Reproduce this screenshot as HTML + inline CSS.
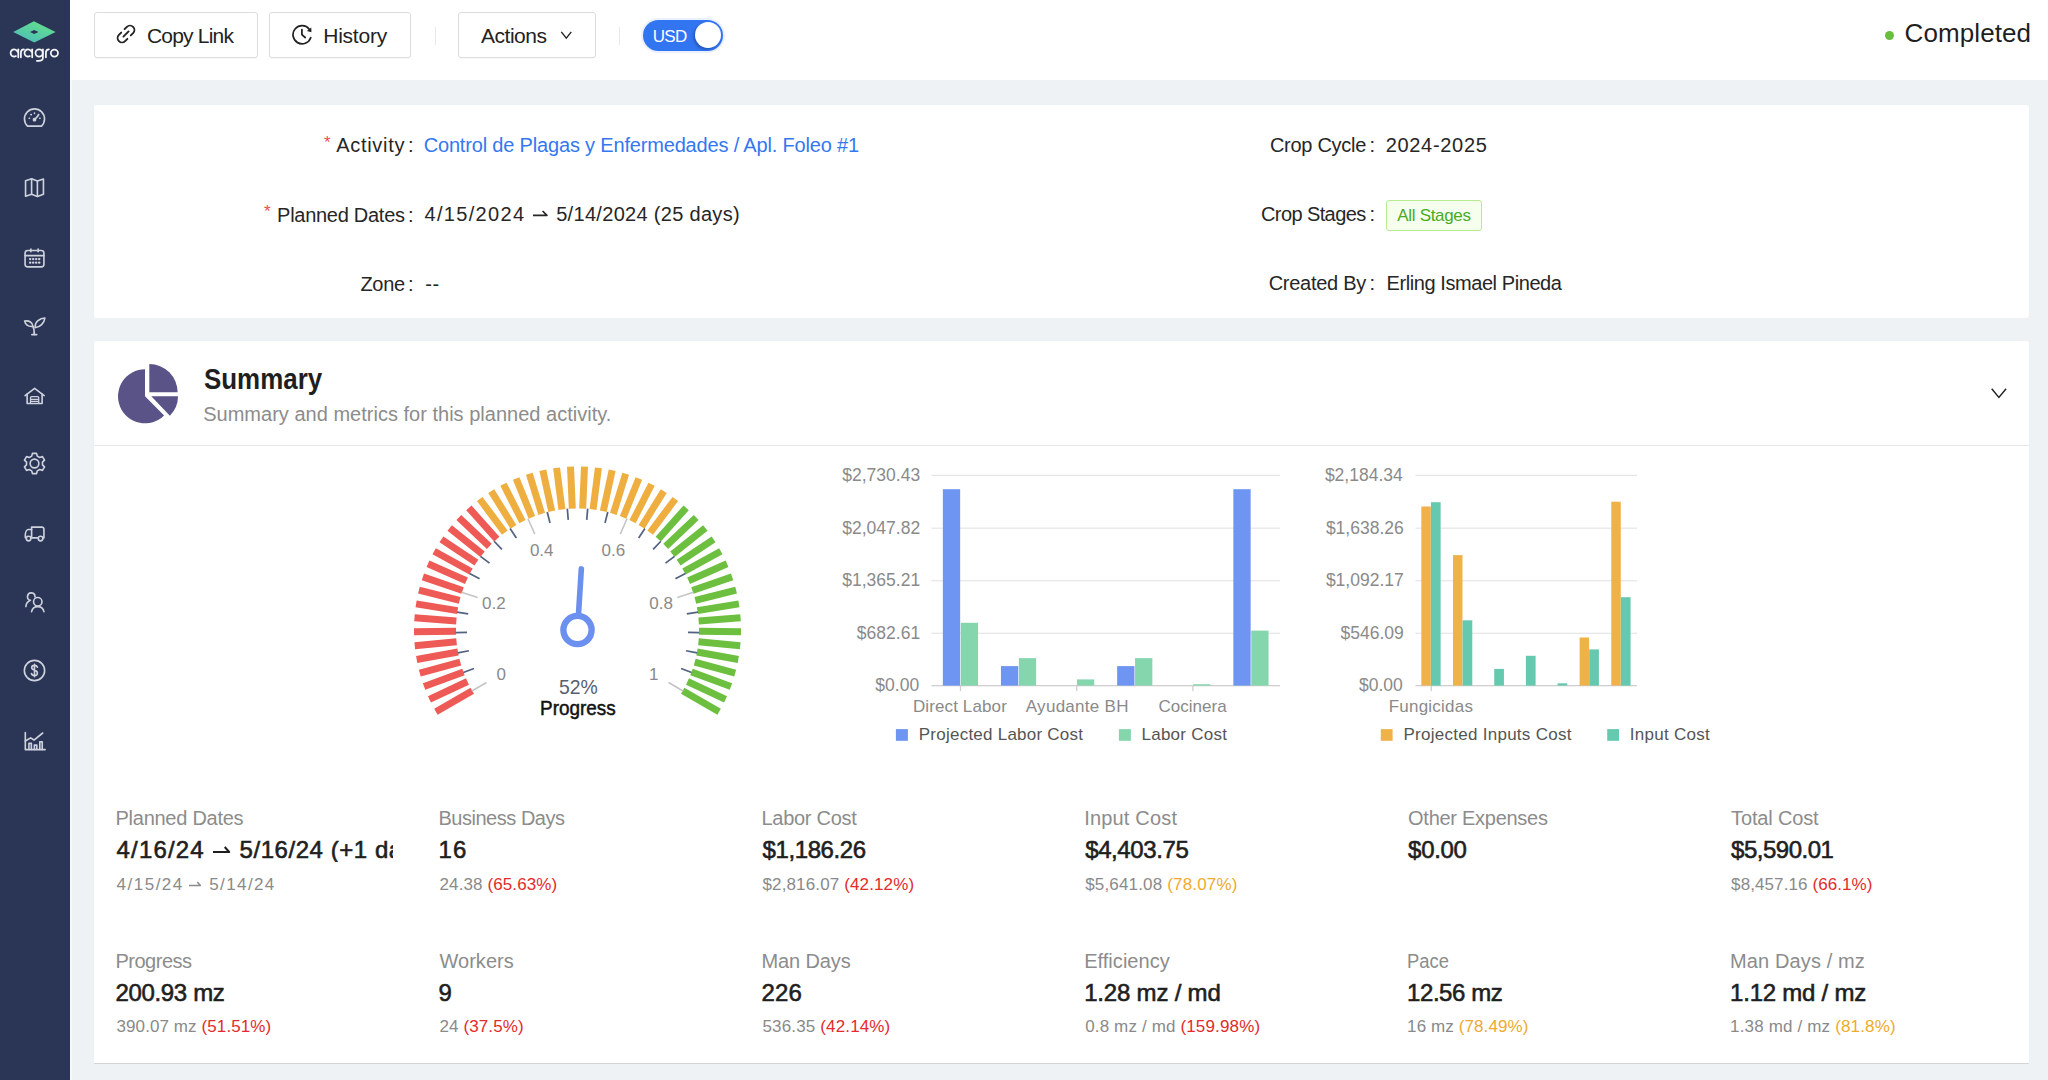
<!DOCTYPE html>
<html><head><meta charset="utf-8">
<style>
*{box-sizing:border-box;margin:0;padding:0}
html,body{width:2048px;height:1080px;overflow:hidden;background:#EFF2F5;font-family:"Liberation Sans",sans-serif;color:#222}
.abs{position:absolute}
.tx{position:absolute;white-space:nowrap;line-height:1}
</style></head>
<body>
<div class="abs" style="left:0;top:0;width:70px;height:1080px;background:#2B3556"></div>
<svg class="abs" style="left:0;top:0" width="70" height="70" viewBox="0 0 70 70">
<defs><linearGradient id="lg" x1="0.8" y1="0" x2="0.2" y2="1"><stop offset="0.2" stop-color="#60DA93"/><stop offset="0.75" stop-color="#52C5AE"/></linearGradient></defs>
<path d="M33.9 21.3 L55.6 31.9 L34.3 42.6 L13.2 31.9 Z" fill="url(#lg)"/>
<path d="M34.2 29.9 L38.4 31.9 L34.2 34 L30 31.9 Z" fill="#2B3556"/>
</svg>
<svg class="abs" style="left:0;top:40px" width="70" height="25" viewBox="0 40 70 25"><g fill="none" stroke="#F4F5F8" stroke-width="1.75" stroke-linecap="round">
<path d="M14.2 53 m3.38 -1.23 A3.6 3.6 0 1 0 16.0 56.1"/><path d="M18.3 49.3 V57.3"/>
<path d="M20.9 57.3 V52.8 C20.9 50.4 22.0 49.3 23.9 49.3"/>
<path d="M28.1 53 m3.38 -1.23 A3.6 3.6 0 1 0 29.9 56.1"/><path d="M32.2 49.3 V57.3"/>
<circle cx="39.1" cy="53" r="3.6"/><path d="M42.9 49.3 V57.8 C42.9 60.2 41.2 60.9 38.6 60.9 H36.9"/>
<path d="M45.9 57.3 V52.8 C45.9 50.4 47.0 49.3 48.9 49.3"/>
<circle cx="54.4" cy="53.1" r="3.6"/>
</g></svg>
<svg class="abs" style="left:19.5px;top:103.5px" width="29" height="29" viewBox="0 0 24 24"><g fill="none" stroke="#CDD2DC" stroke-width="1.35" stroke-linecap="round" stroke-linejoin="round"><path d="M6.2 18.3 A8.3 8.3 0 1 1 17.8 18.3 Z"/><path d="M12 13 L15 9.6"/><circle cx="12" cy="13" r="0.9" fill="#CDD2DC"/><path d="M7.6 11.8h.3M9 8.8h.3M12 7.6v.3M15.2 8.8h.3M16.3 11.8h.3"/></g></svg>
<svg class="abs" style="left:19.5px;top:172.5px" width="29" height="29" viewBox="0 0 24 24"><g fill="none" stroke="#CDD2DC" stroke-width="1.35" stroke-linecap="round" stroke-linejoin="round"><path d="M4.6 6.4 L9.6 4.8 L14.4 6.6 L19.4 5 V17.6 L14.4 19.4 L9.6 17.6 L4.6 19.2 Z"/><path d="M9.6 4.8 V17.6 M14.4 6.6 V19.4"/></g></svg>
<svg class="abs" style="left:19.5px;top:242.5px" width="29" height="29" viewBox="0 0 24 24"><g fill="none" stroke="#CDD2DC" stroke-width="1.35" stroke-linecap="round" stroke-linejoin="round"><rect x="4.2" y="6.2" width="15.6" height="13.6" rx="2.2"/><path d="M4.2 10.4 H19.8 M9 5 V7.2 M15 5 V7.2"/><path d="M8.3 13.3h.2M10.8 13.3h.2M13.3 13.3h.2M15.8 13.3h.2M8.3 16.3h.2M10.8 16.3h.2M13.3 16.3h.2M15.8 16.3h.2" stroke-width="1.9"/></g></svg>
<svg class="abs" style="left:19.5px;top:311.0px" width="29" height="29" viewBox="0 0 24 24"><g fill="none" stroke="#CDD2DC" stroke-width="1.35" stroke-linecap="round" stroke-linejoin="round"><path d="M11.8 19.5 C11.8 16.5 11.6 14.5 10.7 12.8"/><path d="M9.8 19.6 H13.8"/><path d="M3.8 8.4 C7.5 7.6 10.6 9.5 10.7 12.8 C7 13.2 4.6 11.2 3.8 8.4 Z"/><path d="M20.6 5.8 C16.5 6 12.2 8.8 12.5 13.8 C16.6 13.4 20.1 10.2 20.6 5.8 Z"/></g></svg>
<svg class="abs" style="left:19.5px;top:380.5px" width="29" height="29" viewBox="0 0 24 24"><g fill="none" stroke="#CDD2DC" stroke-width="1.35" stroke-linecap="round" stroke-linejoin="round"><path d="M4.2 12.1 L12.1 6.1 L20 12.1"/><path d="M5.9 10.9 V18.6 H18.3 V10.9"/><path d="M8.7 18.4 V13.8 Q8.7 12.9 9.6 12.9 H14.6 Q15.5 12.9 15.5 13.8 V18.4 M8.7 15.2 H15.5 M8.7 16.8 H15.5" stroke-width="1.1"/></g></svg>
<svg class="abs" style="left:19.5px;top:448.7px" width="29" height="29" viewBox="0 0 24 24"><g fill="none" stroke="#CDD2DC" stroke-width="1.35" stroke-linecap="round" stroke-linejoin="round"><path d="M10.3 4.6 H13.7 L14.3 6.9 L16.3 8 L18.6 7.3 L20.3 10.2 L18.6 11.9 V14.1 L20.3 15.8 L18.6 18.7 L16.3 18 L14.3 19.1 L13.7 21.4 H10.3 L9.7 19.1 L7.7 18 L5.4 18.7 L3.7 15.8 L5.4 14.1 V11.9 L3.7 10.2 L5.4 7.3 L7.7 8 L9.7 6.9 Z" transform="translate(0,-1)"/><circle cx="12" cy="12" r="3.6"/></g></svg>
<svg class="abs" style="left:19.5px;top:518.3px" width="29" height="29" viewBox="0 0 24 24"><g fill="none" stroke="#CDD2DC" stroke-width="1.35" stroke-linecap="round" stroke-linejoin="round"><path d="M9.6 16.5 H15.2 M18.8 16.5 H19.8 V9.2 A1.7 1.7 0 0 0 18.1 7.5 H9.6 V16.5"/><path d="M9.6 9.5 H7 C5.4 9.5 4.4 12 4.4 14.2 V16.2 L5.2 16.6"/><circle cx="7.1" cy="17" r="1.9"/><circle cx="17" cy="17" r="1.9"/></g></svg>
<svg class="abs" style="left:19.5px;top:587.3px" width="29" height="29" viewBox="0 0 24 24"><g fill="none" stroke="#CDD2DC" stroke-width="1.35" stroke-linecap="round" stroke-linejoin="round"><path d="M12.4 8.2 A3.1 3.1 0 1 0 8.6 11 C6.6 11.8 5 13.8 4.9 16.2"/><circle cx="14.7" cy="12.2" r="3.5"/><path d="M9.6 20.4 A5.2 5.2 0 0 1 19.8 20.4"/></g></svg>
<svg class="abs" style="left:19.5px;top:656.3px" width="29" height="29" viewBox="0 0 24 24"><g fill="none" stroke="#CDD2DC" stroke-width="1.35" stroke-linecap="round" stroke-linejoin="round"><circle cx="12" cy="12" r="8.4"/><path d="M14.4 9.3 C14 8.2 13.1 7.8 12 7.8 C10.6 7.8 9.7 8.6 9.7 9.7 C9.7 12.3 14.4 11 14.4 14 C14.4 15.3 13.3 16.2 12 16.2 C10.7 16.2 9.8 15.6 9.5 14.5 M12 6.8 V17.2"/></g></svg>
<svg class="abs" style="left:19.5px;top:726.0px" width="29" height="29" viewBox="0 0 24 24"><g fill="none" stroke="#CDD2DC" stroke-width="1.35" stroke-linecap="round" stroke-linejoin="round"><path d="M4.4 5.4 V19.6 H20.8"/><path d="M4.4 12.4 L8.8 9.8 L11.6 11.6 L18.8 5.8"/><path d="M7.4 19.4 V14.4 H9.4 V19.4 M11.9 19.4 V15.8 H13.9 V19.4 M16.4 19.4 V13 H18.4 V19.4"/></g></svg><div class="abs" style="left:70px;top:0;width:1978px;height:80px;background:#fff"></div>
<div class="abs" style="left:70px;top:80px;width:1.6px;height:1000px;background:#F5F9FD"></div>
<div class="abs" style="left:94px;top:12px;width:164px;height:46px;border:1px solid #dcdcdc;border-radius:3px;box-shadow:0 1px 1px rgba(0,0,0,.03)"></div>
<div class="abs" style="left:269px;top:12px;width:142px;height:46px;border:1px solid #dcdcdc;border-radius:3px;box-shadow:0 1px 1px rgba(0,0,0,.03)"></div>
<div class="abs" style="left:458px;top:12px;width:138px;height:46px;border:1px solid #dcdcdc;border-radius:3px;box-shadow:0 1px 1px rgba(0,0,0,.03)"></div>
<div class="abs" style="left:434.5px;top:27px;width:1px;height:18px;background:#e8e8e8"></div>
<div class="abs" style="left:619px;top:27px;width:1px;height:18px;background:#e8e8e8"></div>
<svg class="abs" style="left:116px;top:24px" width="20" height="20" viewBox="0 0 20 20"><g fill="none" stroke="#222" stroke-width="1.9" stroke-linecap="round"><path d="M8.6 5.2 L10.9 2.9 A3.4 3.4 0 0 1 17.1 9.1 L14.8 11.4"/><path d="M11.4 14.8 L9.1 17.1 A3.4 3.4 0 0 1 2.9 10.9 L5.2 8.6"/><path d="M7.4 12.6 L12.6 7.4"/></g></svg>
<svg class="abs" style="left:292px;top:24px" width="21" height="21" viewBox="0 0 21 21"><g fill="none" stroke="#222" stroke-width="1.75" stroke-linecap="round"><path d="M17.3 5.2 A9.1 9.1 0 1 0 18.7 13.7"/><path d="M9.9 5.6 V10.6 L13.2 13.5"/></g><path d="M19.3 3.4 L19.4 8.3 L14.9 6.9 Z" fill="#222"/></svg>
<svg class="abs" style="left:560px;top:30px" width="13" height="10" viewBox="0 0 13 10"><path d="M1.3 1.8 L6.3 8.2 L11.3 1.8" fill="none" stroke="#222" stroke-width="1.35"/></svg>
<div class="abs" style="left:641px;top:18px;width:84px;height:35px;border-radius:18px;background:rgba(50,117,240,.10)"></div>
<div class="abs" style="left:643px;top:20px;width:80px;height:31px;border-radius:16px;background:#3275F0"></div>
<div class="abs" style="left:695.2px;top:22.3px;width:26px;height:26px;border-radius:50%;background:#fff;box-shadow:-1.5px 1.5px 2.5px rgba(0,30,90,.35)"></div>
<div class="abs" style="left:1885px;top:30.7px;width:9.3px;height:9.3px;border-radius:50%;background:#68BF3E"></div>
<div class="abs" style="left:94px;top:104.5px;width:1935px;height:213.3px;background:#fff;border-radius:2px;box-shadow:0 0 1px rgba(0,0,0,.06)"></div>
<div class="abs" style="left:94px;top:340.7px;width:1935px;height:722.3px;background:#fff;border-radius:2px 2px 0 0;box-shadow:0 0 1px rgba(0,0,0,.06)"></div>
<div class="abs" style="left:94px;top:1062.5px;width:1935px;height:1.2px;background:#D4D4D4"></div>
<div class="abs" style="left:94px;top:445px;width:1935px;height:1px;background:#e8e8e8"></div>
<div class="abs" style="left:1386px;top:200px;width:96px;height:30.5px;border:1px solid #B7EB8F;background:#F6FFED;border-radius:3px"></div>
<div class="tx" style="left:324px;top:134px;font-size:17px;color:#EC4F4F">*</div>
<div class="tx" style="left:264px;top:202.5px;font-size:17px;color:#EC4F4F">*</div>
<svg class="abs" style="left:112px;top:358px" width="72" height="72" viewBox="112 358 72 72">
<path d="M145 369.3 A27 27 0 1 0 164.1 415.4 L145 396.3 Z" fill="#5A5387"/>
<path d="M149.3 364 A28.3 28.3 0 0 1 177.6 392.3 L149.3 392.3 Z" fill="#5A5387"/>
<path d="M151.3 396.3 H178 A27.5 27.5 0 0 1 169.9 415.7 Z" fill="#5A5387"/>
</svg>
<svg class="abs" style="left:1990px;top:387px" width="18" height="13" viewBox="0 0 18 13"><path d="M1.7 1.8 L8.9 10.4 L16.1 1.8" fill="none" stroke="#222" stroke-width="1.45"/></svg>
<svg class="abs" style="left:530.8px;top:209.1px" width="17.90000000000009" height="8.3"><path d="M2 6.3 H15.900000000000091 L11.60000000000009 2" fill="none" stroke="#262626" stroke-width="1.7" stroke-linejoin="round"/></svg><svg class="abs" style="left:211px;top:844.7px" width="20.19999999999999" height="9"><path d="M2 7 H18.19999999999999 L13.699999999999989 2" fill="none" stroke="#1f1f1f" stroke-width="2.0" stroke-linejoin="round"/></svg><svg class="abs" style="left:187.2px;top:880.4px" width="15.400000000000006" height="7.5"><path d="M2 5.5 H13.400000000000006 L10.300000000000006 2" fill="none" stroke="#8a8a8a" stroke-width="1.5" stroke-linejoin="round"/></svg>
<svg class="abs" style="left:0;top:0" width="2048" height="1080" font-family="Liberation Sans"><line x1="472.28" y1="690.75" x2="435.90" y2="711.75" stroke="#EE5A55" stroke-width="7.0"/><line x1="467.48" y1="681.54" x2="429.44" y2="699.36" stroke="#EE5A55" stroke-width="7.0"/><line x1="463.48" y1="671.96" x2="424.06" y2="686.47" stroke="#EE5A55" stroke-width="7.0"/><line x1="460.31" y1="662.07" x2="419.80" y2="673.16" stroke="#EE5A55" stroke-width="7.0"/><line x1="458.00" y1="651.95" x2="416.69" y2="659.54" stroke="#EE5A55" stroke-width="7.0"/><line x1="456.56" y1="641.67" x2="414.76" y2="645.70" stroke="#EE5A55" stroke-width="7.0"/><line x1="456.01" y1="631.30" x2="414.01" y2="631.75" stroke="#EE5A55" stroke-width="7.0"/><line x1="456.34" y1="620.92" x2="414.46" y2="617.78" stroke="#EE5A55" stroke-width="7.0"/><line x1="457.56" y1="610.61" x2="416.10" y2="603.91" stroke="#EE5A55" stroke-width="7.0"/><line x1="459.65" y1="600.44" x2="418.91" y2="590.22" stroke="#EE5A55" stroke-width="7.0"/><line x1="462.61" y1="590.48" x2="422.89" y2="576.82" stroke="#EE5A55" stroke-width="7.0"/><line x1="466.40" y1="580.82" x2="427.99" y2="563.82" stroke="#EE5A55" stroke-width="7.0"/><line x1="471.00" y1="571.51" x2="434.19" y2="551.29" stroke="#EE5A55" stroke-width="7.0"/><line x1="476.39" y1="562.63" x2="441.43" y2="539.35" stroke="#EE5A55" stroke-width="7.0"/><line x1="482.51" y1="554.25" x2="449.67" y2="528.06" stroke="#EE5A55" stroke-width="7.0"/><line x1="489.32" y1="546.41" x2="458.84" y2="517.52" stroke="#EE5A55" stroke-width="7.0"/><line x1="496.78" y1="539.19" x2="468.88" y2="507.80" stroke="#EE5A55" stroke-width="7.0"/><line x1="504.83" y1="532.63" x2="479.71" y2="498.97" stroke="#EEAE40" stroke-width="7.0"/><line x1="513.41" y1="526.78" x2="491.25" y2="491.10" stroke="#EEAE40" stroke-width="7.0"/><line x1="522.46" y1="521.68" x2="503.43" y2="484.24" stroke="#EEAE40" stroke-width="7.0"/><line x1="531.91" y1="517.38" x2="516.14" y2="478.45" stroke="#EEAE40" stroke-width="7.0"/><line x1="541.69" y1="513.90" x2="529.31" y2="473.76" stroke="#EEAE40" stroke-width="7.0"/><line x1="551.73" y1="511.26" x2="542.82" y2="470.22" stroke="#EEAE40" stroke-width="7.0"/><line x1="561.96" y1="509.50" x2="556.59" y2="467.84" stroke="#EEAE40" stroke-width="7.0"/><line x1="572.31" y1="508.61" x2="570.51" y2="466.65" stroke="#EEAE40" stroke-width="7.0"/><line x1="582.69" y1="508.61" x2="584.49" y2="466.65" stroke="#EEAE40" stroke-width="7.0"/><line x1="593.04" y1="509.50" x2="598.41" y2="467.84" stroke="#EEAE40" stroke-width="7.0"/><line x1="603.27" y1="511.26" x2="612.18" y2="470.22" stroke="#EEAE40" stroke-width="7.0"/><line x1="613.31" y1="513.90" x2="625.69" y2="473.76" stroke="#EEAE40" stroke-width="7.0"/><line x1="623.09" y1="517.38" x2="638.86" y2="478.45" stroke="#EEAE40" stroke-width="7.0"/><line x1="632.54" y1="521.68" x2="651.57" y2="484.24" stroke="#EEAE40" stroke-width="7.0"/><line x1="641.59" y1="526.78" x2="663.75" y2="491.10" stroke="#EEAE40" stroke-width="7.0"/><line x1="650.17" y1="532.63" x2="675.29" y2="498.97" stroke="#EEAE40" stroke-width="7.0"/><line x1="658.22" y1="539.19" x2="686.12" y2="507.80" stroke="#6DBF3F" stroke-width="7.0"/><line x1="665.68" y1="546.41" x2="696.16" y2="517.52" stroke="#6DBF3F" stroke-width="7.0"/><line x1="672.49" y1="554.25" x2="705.33" y2="528.06" stroke="#6DBF3F" stroke-width="7.0"/><line x1="678.61" y1="562.63" x2="713.57" y2="539.35" stroke="#6DBF3F" stroke-width="7.0"/><line x1="684.00" y1="571.51" x2="720.81" y2="551.29" stroke="#6DBF3F" stroke-width="7.0"/><line x1="688.60" y1="580.82" x2="727.01" y2="563.82" stroke="#6DBF3F" stroke-width="7.0"/><line x1="692.39" y1="590.48" x2="732.11" y2="576.82" stroke="#6DBF3F" stroke-width="7.0"/><line x1="695.35" y1="600.44" x2="736.09" y2="590.22" stroke="#6DBF3F" stroke-width="7.0"/><line x1="697.44" y1="610.61" x2="738.90" y2="603.91" stroke="#6DBF3F" stroke-width="7.0"/><line x1="698.66" y1="620.92" x2="740.54" y2="617.78" stroke="#6DBF3F" stroke-width="7.0"/><line x1="698.99" y1="631.30" x2="740.99" y2="631.75" stroke="#6DBF3F" stroke-width="7.0"/><line x1="698.44" y1="641.67" x2="740.24" y2="645.70" stroke="#6DBF3F" stroke-width="7.0"/><line x1="697.00" y1="651.95" x2="738.31" y2="659.54" stroke="#6DBF3F" stroke-width="7.0"/><line x1="694.69" y1="662.07" x2="735.20" y2="673.16" stroke="#6DBF3F" stroke-width="7.0"/><line x1="691.52" y1="671.96" x2="730.94" y2="686.47" stroke="#6DBF3F" stroke-width="7.0"/><line x1="687.52" y1="681.54" x2="725.56" y2="699.36" stroke="#6DBF3F" stroke-width="7.0"/><line x1="682.72" y1="690.75" x2="719.10" y2="711.75" stroke="#6DBF3F" stroke-width="7.0"/><line x1="486.57" y1="682.50" x2="471.84" y2="691.00" stroke="#C4C4C4" stroke-width="1.5"/><line x1="473.93" y1="668.52" x2="463.34" y2="672.46" stroke="#526281" stroke-width="1.7"/><line x1="468.96" y1="650.71" x2="457.86" y2="652.82" stroke="#526281" stroke-width="1.7"/><line x1="467.02" y1="632.31" x2="455.73" y2="632.55" stroke="#526281" stroke-width="1.7"/><line x1="468.19" y1="613.86" x2="457.01" y2="612.21" stroke="#526281" stroke-width="1.7"/><line x1="477.64" y1="597.55" x2="461.47" y2="592.30" stroke="#C4C4C4" stroke-width="1.5"/><line x1="479.57" y1="578.81" x2="469.56" y2="573.57" stroke="#526281" stroke-width="1.7"/><line x1="489.48" y1="563.19" x2="480.48" y2="556.36" stroke="#526281" stroke-width="1.7"/><line x1="501.86" y1="549.45" x2="494.12" y2="541.21" stroke="#526281" stroke-width="1.7"/><line x1="516.35" y1="537.96" x2="510.10" y2="528.55" stroke="#526281" stroke-width="1.7"/><line x1="534.79" y1="534.08" x2="527.88" y2="518.55" stroke="#C4C4C4" stroke-width="1.5"/><line x1="550.02" y1="522.97" x2="547.21" y2="512.03" stroke="#526281" stroke-width="1.7"/><line x1="568.25" y1="519.89" x2="567.31" y2="508.63" stroke="#526281" stroke-width="1.7"/><line x1="586.75" y1="519.89" x2="587.69" y2="508.63" stroke="#526281" stroke-width="1.7"/><line x1="604.98" y1="522.97" x2="607.79" y2="512.03" stroke="#526281" stroke-width="1.7"/><line x1="620.21" y1="534.08" x2="627.12" y2="518.55" stroke="#C4C4C4" stroke-width="1.5"/><line x1="638.65" y1="537.96" x2="644.90" y2="528.55" stroke="#526281" stroke-width="1.7"/><line x1="653.14" y1="549.45" x2="660.88" y2="541.21" stroke="#526281" stroke-width="1.7"/><line x1="665.52" y1="563.19" x2="674.52" y2="556.36" stroke="#526281" stroke-width="1.7"/><line x1="675.43" y1="578.81" x2="685.44" y2="573.57" stroke="#526281" stroke-width="1.7"/><line x1="677.36" y1="597.55" x2="693.53" y2="592.30" stroke="#C4C4C4" stroke-width="1.5"/><line x1="686.81" y1="613.86" x2="697.99" y2="612.21" stroke="#526281" stroke-width="1.7"/><line x1="687.98" y1="632.31" x2="699.27" y2="632.55" stroke="#526281" stroke-width="1.7"/><line x1="686.04" y1="650.71" x2="697.14" y2="652.82" stroke="#526281" stroke-width="1.7"/><line x1="681.07" y1="668.52" x2="691.66" y2="672.46" stroke="#526281" stroke-width="1.7"/><line x1="668.43" y1="682.50" x2="683.16" y2="691.00" stroke="#C4C4C4" stroke-width="1.5"/><text x="501.29" y="680.20" text-anchor="middle" font-size="17" fill="#8A8A8A">0</text><text x="493.81" y="609.01" text-anchor="middle" font-size="17" fill="#8A8A8A">0.2</text><text x="541.71" y="555.81" text-anchor="middle" font-size="17" fill="#8A8A8A">0.4</text><text x="613.29" y="555.81" text-anchor="middle" font-size="17" fill="#8A8A8A">0.6</text><text x="661.19" y="609.01" text-anchor="middle" font-size="17" fill="#8A8A8A">0.8</text><text x="653.71" y="680.20" text-anchor="middle" font-size="17" fill="#8A8A8A">1</text><line x1="578.50" y1="614.03" x2="581.34" y2="568.92" stroke="#6C90F0" stroke-width="5.6" stroke-linecap="round"/><circle cx="577.5" cy="630.0" r="14.1" fill="none" stroke="#6C90F0" stroke-width="6.4"/></svg>
<svg class="abs" style="left:0;top:0" width="2048" height="1080"><rect x="931.4" y="474.80" width="348.60" height="1.1" fill="#E3E3E3"/><rect x="931.4" y="527.60" width="348.60" height="1.1" fill="#E3E3E3"/><rect x="931.4" y="580.20" width="348.60" height="1.1" fill="#E3E3E3"/><rect x="931.4" y="632.70" width="348.60" height="1.1" fill="#E3E3E3"/><rect x="931.4" y="685.00" width="348.60" height="1.3" fill="#CFCFCF"/><rect x="959.85" y="685.60" width="1.3" height="5.5" fill="#CFCFCF"/><rect x="1076.05" y="685.60" width="1.3" height="5.5" fill="#CFCFCF"/><rect x="1192.25" y="685.60" width="1.3" height="5.5" fill="#CFCFCF"/><rect x="942.85" y="489.20" width="17.30" height="196.40" fill="#6E95F1"/><rect x="960.75" y="622.80" width="17.30" height="62.80" fill="#86D6AD"/><rect x="1000.95" y="666.10" width="17.30" height="19.50" fill="#6E95F1"/><rect x="1018.85" y="658.10" width="17.30" height="27.50" fill="#86D6AD"/><rect x="1076.95" y="679.40" width="17.30" height="6.20" fill="#86D6AD"/><rect x="1117.15" y="666.10" width="17.30" height="19.50" fill="#6E95F1"/><rect x="1135.05" y="658.10" width="17.30" height="27.50" fill="#86D6AD"/><rect x="1193.15" y="684.20" width="17.30" height="1.40" fill="#86D6AD"/><rect x="1233.35" y="489.20" width="17.30" height="196.40" fill="#6E95F1"/><rect x="1251.25" y="630.60" width="17.30" height="55.00" fill="#86D6AD"/><rect x="895.9" y="729.1" width="12" height="11.7" fill="#6E95F1"/><rect x="1118.9" y="729.1" width="12" height="11.7" fill="#86D6AD"/><rect x="1415.4" y="474.80" width="221.60" height="1.1" fill="#E3E3E3"/><rect x="1415.4" y="527.60" width="221.60" height="1.1" fill="#E3E3E3"/><rect x="1415.4" y="580.20" width="221.60" height="1.1" fill="#E3E3E3"/><rect x="1415.4" y="632.70" width="221.60" height="1.1" fill="#E3E3E3"/><rect x="1415.4" y="685.00" width="221.60" height="1.3" fill="#CFCFCF"/><rect x="1430.63" y="685.60" width="1.3" height="5.5" fill="#CFCFCF"/><rect x="1421.33" y="506.50" width="9.50" height="179.10" fill="#EFB249"/><rect x="1430.93" y="502.20" width="9.70" height="183.40" fill="#65C9B0"/><rect x="1452.99" y="555.10" width="9.50" height="130.50" fill="#EFB249"/><rect x="1462.59" y="620.30" width="9.70" height="65.30" fill="#65C9B0"/><rect x="1494.24" y="668.90" width="9.70" height="16.70" fill="#65C9B0"/><rect x="1525.90" y="655.80" width="9.70" height="29.80" fill="#65C9B0"/><rect x="1557.56" y="683.30" width="9.70" height="2.30" fill="#65C9B0"/><rect x="1579.61" y="637.50" width="9.50" height="48.10" fill="#EFB249"/><rect x="1589.21" y="649.40" width="9.70" height="36.20" fill="#65C9B0"/><rect x="1611.27" y="501.70" width="9.50" height="183.90" fill="#EFB249"/><rect x="1620.87" y="597.20" width="9.70" height="88.40" fill="#65C9B0"/><rect x="1380.8" y="729.1" width="11.8" height="11.7" fill="#EFB249"/><rect x="1607.2" y="729.1" width="11.8" height="11.7" fill="#65C9B0"/></svg>
<div class="tx" id="t_copy" style="left:147.00px;top:24.82px;font-size:21px;color:#222;letter-spacing:-0.810px;">Copy Link</div>
<div class="tx" style="left:323.20px;top:24.52px;font-size:21px;color:#222;letter-spacing:-0.223px;">History</div>
<div class="tx" style="left:481.00px;top:24.52px;font-size:21px;color:#222;letter-spacing:-0.478px;">Actions</div>
<div class="tx" style="left:652.80px;top:27.81px;font-size:17px;color:#fff;letter-spacing:-0.708px;">USD</div>
<div class="tx" style="left:1904.60px;top:20.49px;font-size:26px;color:#1f1f1f;letter-spacing:0.091px;">Completed</div>
<div class="tx" style="left:336.30px;top:134.67px;font-size:20px;color:#262626;letter-spacing:0.680px;">Activity</div>
<div class="tx" style="left:408.00px;top:134.67px;font-size:20px;color:#262626;">:</div>
<div class="tx" style="left:423.70px;top:134.67px;font-size:20px;color:#3478F0;letter-spacing:-0.174px;">Control de Plagas y Enfermedades / Apl. Foleo #1</div>
<div class="tx" style="left:277.10px;top:204.57px;font-size:20px;color:#262626;letter-spacing:-0.275px;">Planned Dates</div>
<div class="tx" style="left:408.00px;top:204.57px;font-size:20px;color:#262626;">:</div>
<div class="tx" style="left:360.40px;top:273.67px;font-size:20px;color:#262626;letter-spacing:-0.288px;">Zone</div>
<div class="tx" style="left:408.00px;top:273.67px;font-size:20px;color:#262626;">:</div>
<div class="tx" style="left:425.30px;top:273.67px;font-size:20px;color:#262626;letter-spacing:0.540px;">--</div>
<div class="tx" style="left:1269.90px;top:134.67px;font-size:20px;color:#262626;letter-spacing:-0.277px;">Crop Cycle</div>
<div class="tx" style="left:1369.50px;top:134.67px;font-size:20px;color:#262626;">:</div>
<div class="tx" style="left:1385.70px;top:134.67px;font-size:20px;color:#262626;letter-spacing:0.685px;">2024-2025</div>
<div class="tx" style="left:1261.00px;top:204.07px;font-size:20px;color:#262626;letter-spacing:-0.597px;">Crop Stages</div>
<div class="tx" style="left:1369.50px;top:204.07px;font-size:20px;color:#262626;">:</div>
<div class="tx" style="left:1397.30px;top:206.81px;font-size:17px;color:#4AAA1E;letter-spacing:-0.316px;">All Stages</div>
<div class="tx" style="left:1268.70px;top:273.17px;font-size:20px;color:#262626;letter-spacing:-0.283px;">Created By</div>
<div class="tx" style="left:1369.50px;top:273.17px;font-size:20px;color:#262626;">:</div>
<div class="tx" style="left:1386.60px;top:273.17px;font-size:20px;color:#262626;letter-spacing:-0.427px;">Erling Ismael Pineda</div>
<div class="tx" style="left:203.80px;top:363.81px;font-size:30px;color:#1f1f1f;font-weight:bold;transform:scaleX(0.8640);transform-origin:-0.00px 0;">Summary</div>
<div class="tx" style="left:203.20px;top:403.97px;font-size:20px;color:#8c8c8c;letter-spacing:0.013px;">Summary and metrics for this planned activity.</div>
<div class="tx" style="left:115.50px;top:807.87px;font-size:20px;color:#8c8c8c;letter-spacing:-0.258px;">Planned Dates</div>
<div class="tx" style="left:438.50px;top:807.87px;font-size:20px;color:#8c8c8c;letter-spacing:-0.481px;">Business Days</div>
<div class="tx" style="left:438.50px;top:838.08px;font-size:24px;color:#1f1f1f;letter-spacing:1.052px;-webkit-text-stroke:0.6px #1f1f1f;">16</div>
<div class="tx" style="left:439.50px;top:876.41px;font-size:17px;color:#8a8a8a;letter-spacing:0.109px;">24.38 <span style="color:#E32B2B">(65.63%)</span></div>
<div class="tx" style="left:761.50px;top:807.87px;font-size:20px;color:#8c8c8c;letter-spacing:-0.286px;">Labor Cost</div>
<div class="tx" style="left:762.50px;top:838.08px;font-size:24px;color:#1f1f1f;letter-spacing:-0.390px;-webkit-text-stroke:0.6px #1f1f1f;">$1,186.26</div>
<div class="tx" style="left:762.50px;top:876.41px;font-size:17px;color:#8a8a8a;letter-spacing:0.131px;">$2,816.07 <span style="color:#E32B2B">(42.12%)</span></div>
<div class="tx" style="left:1084.20px;top:807.87px;font-size:20px;color:#8c8c8c;letter-spacing:0.177px;">Input Cost</div>
<div class="tx" style="left:1085.20px;top:838.08px;font-size:24px;color:#1f1f1f;letter-spacing:-0.403px;-webkit-text-stroke:0.6px #1f1f1f;">$4,403.75</div>
<div class="tx" style="left:1085.20px;top:876.41px;font-size:17px;color:#8a8a8a;letter-spacing:0.172px;">$5,641.08 <span style="color:#EFAA2F">(78.07%)</span></div>
<div class="tx" style="left:1408.10px;top:807.87px;font-size:20px;color:#8c8c8c;letter-spacing:-0.278px;">Other Expenses</div>
<div class="tx" style="left:1408.10px;top:838.08px;font-size:24px;color:#1f1f1f;letter-spacing:-0.303px;-webkit-text-stroke:0.6px #1f1f1f;">$0.00</div>
<div class="tx" style="left:1731.10px;top:807.87px;font-size:20px;color:#8c8c8c;letter-spacing:-0.163px;">Total Cost</div>
<div class="tx" style="left:1731.10px;top:838.08px;font-size:24px;color:#1f1f1f;letter-spacing:-0.503px;-webkit-text-stroke:0.6px #1f1f1f;">$5,590.01</div>
<div class="tx" style="left:1731.10px;top:876.41px;font-size:17px;color:#8a8a8a;letter-spacing:0.093px;">$8,457.16 <span style="color:#E32B2B">(66.1%)</span></div>
<div class="tx" style="left:115.50px;top:950.67px;font-size:20px;color:#8c8c8c;letter-spacing:-0.504px;">Progress</div>
<div class="tx" style="left:115.50px;top:980.78px;font-size:24px;color:#1f1f1f;letter-spacing:-0.346px;-webkit-text-stroke:0.6px #1f1f1f;">200.93 mz</div>
<div class="tx" style="left:116.50px;top:1018.41px;font-size:17px;color:#8a8a8a;letter-spacing:0.093px;">390.07 mz <span style="color:#E32B2B">(51.51%)</span></div>
<div class="tx" style="left:439.50px;top:950.67px;font-size:20px;color:#8c8c8c;letter-spacing:0.020px;">Workers</div>
<div class="tx" style="left:438.50px;top:980.78px;font-size:24px;color:#1f1f1f;-webkit-text-stroke:0.6px #1f1f1f;">9</div>
<div class="tx" style="left:439.50px;top:1018.41px;font-size:17px;color:#8a8a8a;letter-spacing:0.100px;">24 <span style="color:#E32B2B">(37.5%)</span></div>
<div class="tx" style="left:761.50px;top:950.67px;font-size:20px;color:#8c8c8c;letter-spacing:-0.118px;">Man Days</div>
<div class="tx" style="left:761.50px;top:980.78px;font-size:24px;color:#1f1f1f;letter-spacing:0.202px;-webkit-text-stroke:0.6px #1f1f1f;">226</div>
<div class="tx" style="left:762.50px;top:1018.41px;font-size:17px;color:#8a8a8a;letter-spacing:0.147px;">536.35 <span style="color:#E32B2B">(42.14%)</span></div>
<div class="tx" style="left:1084.20px;top:950.67px;font-size:20px;color:#8c8c8c;letter-spacing:0.031px;">Efficiency</div>
<div class="tx" style="left:1084.20px;top:980.78px;font-size:24px;color:#1f1f1f;letter-spacing:-0.197px;-webkit-text-stroke:0.6px #1f1f1f;">1.28 mz / md</div>
<div class="tx" style="left:1085.20px;top:1018.41px;font-size:17px;color:#8a8a8a;letter-spacing:0.145px;">0.8 mz / md <span style="color:#E32B2B">(159.98%)</span></div>
<div class="tx" style="left:1407.10px;top:950.67px;font-size:20px;color:#8c8c8c;transform:scaleX(0.9199);transform-origin:1.00px 0;">Pace</div>
<div class="tx" style="left:1407.10px;top:980.78px;font-size:24px;color:#1f1f1f;letter-spacing:-0.446px;-webkit-text-stroke:0.6px #1f1f1f;">12.56 mz</div>
<div class="tx" style="left:1407.10px;top:1018.41px;font-size:17px;color:#8a8a8a;letter-spacing:0.097px;">16 mz <span style="color:#EFAA2F">(78.49%)</span></div>
<div class="tx" style="left:1730.10px;top:950.67px;font-size:20px;color:#8c8c8c;letter-spacing:0.112px;">Man Days / mz</div>
<div class="tx" style="left:1730.10px;top:980.78px;font-size:24px;color:#1f1f1f;letter-spacing:-0.238px;-webkit-text-stroke:0.6px #1f1f1f;">1.12 md / mz</div>
<div class="tx" style="left:1730.10px;top:1018.41px;font-size:17px;color:#8a8a8a;letter-spacing:0.161px;">1.38 md / mz <span style="color:#EFAA2F">(81.8%)</span></div>
<div class="tx" style="left:424.50px;top:204.17px;font-size:20px;color:#262626;letter-spacing:1.319px;">4/15/2024</div>
<div class="tx" style="left:556.20px;top:204.17px;font-size:20px;color:#262626;letter-spacing:0.309px;">5/14/2024 (25 days)</div>
<div class="tx" style="left:116.60px;top:838.18px;font-size:24px;color:#1f1f1f;letter-spacing:1.162px;-webkit-text-stroke:0.6px #1f1f1f;">4/16/24</div>
<div class="tx" id="pd2" style="left:239.60px;top:838.18px;font-size:24px;color:#1f1f1f;letter-spacing:0.550px;-webkit-text-stroke:0.6px #1f1f1f;"><span style="display:inline-block;width:153px;overflow:hidden;vertical-align:top">5/16/24 (+1 days)</span></div>
<div class="tx" style="left:116.60px;top:876.41px;font-size:17px;color:#8a8a8a;letter-spacing:1.489px;">4/15/24</div>
<div class="tx" style="left:209.30px;top:876.41px;font-size:17px;color:#8a8a8a;letter-spacing:1.373px;">5/14/24</div>
<div class="tx" style="left:558.50px;top:676.22px;font-size:21px;color:#58606E;transform:scaleX(0.9236);transform-origin:-0.00px 0;">52%</div>
<div class="tx" style="left:539.80px;top:697.02px;font-size:21px;color:#111;transform:scaleX(0.9003);transform-origin:1.00px 0;-webkit-text-stroke:0.5px #111;">Progress</div>
<div class="tx" style="left:842.28px;top:466.79px;font-size:17.5px;color:#8A8A8A;">$2,730.43</div>
<div class="tx" style="left:842.28px;top:519.59px;font-size:17.5px;color:#8A8A8A;">$2,047.82</div>
<div class="tx" style="left:842.28px;top:572.19px;font-size:17.5px;color:#8A8A8A;">$1,365.21</div>
<div class="tx" style="left:856.87px;top:624.69px;font-size:17.5px;color:#8A8A8A;">$682.61</div>
<div class="tx" style="left:875.34px;top:677.09px;font-size:17.5px;color:#8A8A8A;">$0.00</div>
<div class="tx" style="left:1324.88px;top:466.79px;font-size:17.5px;color:#8A8A8A;">$2,184.34</div>
<div class="tx" style="left:1325.88px;top:519.59px;font-size:17.5px;color:#8A8A8A;">$1,638.26</div>
<div class="tx" style="left:1325.88px;top:572.19px;font-size:17.5px;color:#8A8A8A;">$1,092.17</div>
<div class="tx" style="left:1340.47px;top:624.69px;font-size:17.5px;color:#8A8A8A;">$546.09</div>
<div class="tx" style="left:1358.94px;top:677.09px;font-size:17.5px;color:#8A8A8A;">$0.00</div>
<div class="tx" style="left:912.90px;top:697.51px;font-size:17px;color:#8A8A8A;letter-spacing:0.124px;">Direct Labor</div>
<div class="tx" style="left:1025.80px;top:697.51px;font-size:17px;color:#8A8A8A;letter-spacing:0.281px;">Ayudante BH</div>
<div class="tx" style="left:1158.60px;top:697.51px;font-size:17px;color:#8A8A8A;letter-spacing:0.003px;">Cocinera</div>
<div class="tx" style="left:1388.70px;top:697.51px;font-size:17px;color:#8A8A8A;letter-spacing:0.232px;">Fungicidas</div>
<div class="tx" style="left:918.80px;top:726.41px;font-size:17px;color:#555;letter-spacing:0.238px;">Projected Labor Cost</div>
<div class="tx" style="left:1141.50px;top:726.41px;font-size:17px;color:#555;letter-spacing:0.252px;">Labor Cost</div>
<div class="tx" style="left:1403.40px;top:726.41px;font-size:17px;color:#555;letter-spacing:0.275px;">Projected Inputs Cost</div>
<div class="tx" style="left:1629.80px;top:726.41px;font-size:17px;color:#555;letter-spacing:0.271px;">Input Cost</div>
</body></html>
